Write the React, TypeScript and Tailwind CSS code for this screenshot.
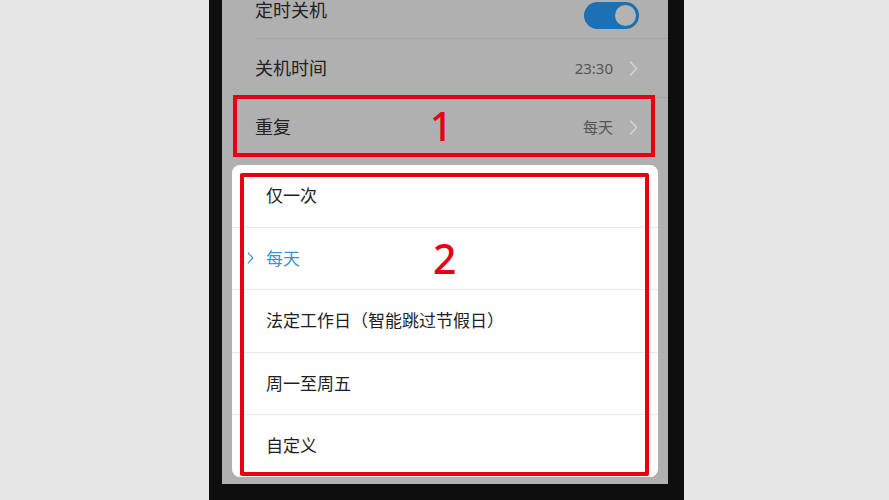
import React from 'react';

const Chevron: React.FC<{ className?: string }> = ({ className }) => (
  <svg width="9" height="15" viewBox="0 0 9 15" className={className} fill="none">
    <polyline points="1.5,1 7.5,7.5 1.5,14" stroke="currentColor" strokeWidth="1.5" strokeLinecap="round" strokeLinejoin="round" />
  </svg>
);

const options = ['仅一次', '每天', '法定工作日（智能跳过节假日）', '周一至周五', '自定义'];

const App: React.FC = () => {
  const selected = '每天';

  return (
    <div
      className="w-full h-[500px] bg-[#e6e6e6] flex pl-[209px] overflow-hidden"
      style={{ fontFamily: '"Noto Sans", "Noto Sans CJK SC", sans-serif' }}
    >
      {/* Phone body */}
      <div className="w-[475px] h-[500px] bg-[#0e0e0e] pl-[13px] pr-[16px] pb-[16px] flex">
        {/* Screen, dimmed behind the sheet */}
        <div className="relative w-[446px] h-[484px] bg-[#b0b0b0] overflow-hidden flex flex-col">
          <div className="-mt-[19px] pl-[33px]">
            <div className="h-[58px] flex items-center justify-between pr-[29px] border-b border-[#a6a6a6]">
              <span className="text-[18px] leading-[18px] text-[#222222]">定时关机</span>
              <div className="w-[55px] h-[27px] rounded-full bg-[#1c70b4] flex items-center justify-end pr-[1px] mt-[12px]">
                <div className="w-[25px] h-[25px] rounded-full bg-[#b3b3b3] border-2 border-[#1c70b4]" />
              </div>
            </div>
            <div className="h-[59px] flex items-center justify-between pr-[30px] border-b border-[#a6a6a6]">
              <span className="text-[18px] text-[#222222]">关机时间</span>
              <div className="flex items-center gap-[16px] text-[#555555]">
                <span className="text-[15px]">23:30</span>
                <Chevron className="text-[#d4d4d4]" />
              </div>
            </div>
            <div className="h-[59px] flex items-center justify-between pr-[30px]">
              <span className="text-[18px] text-[#222222]">重复</span>
              <div className="flex items-center gap-[16px] text-[#555555]">
                <span className="text-[15px]">每天</span>
                <Chevron className="text-[#d4d4d4]" />
              </div>
            </div>
          </div>

          {/* Repeat picker sheet */}
          <div className="relative mt-[8px] mx-[10px] h-[312px] bg-white rounded-[8px] flex flex-col">
            {options.map((opt, i) => {
              const active = opt === selected;
              return (
                <div
                  key={opt}
                  className={`relative flex-1 flex items-center pl-[34px] ${i < options.length - 1 ? 'border-b border-[#e8e8e8]' : ''}`}
                >
                  {active && <Chevron className="absolute left-[15px] text-[#3b92cf] w-[7px] h-[12px]" />}
                  <span className={`text-[17px] ${active ? 'text-[#3b92cf]' : 'text-[#1e1e1e]'}`}>{opt}</span>
                </div>
              );
            })}

            <div className="absolute left-[8px] top-[8px] w-[409px] h-[303px] border-4 border-[#e60012] rounded-[2px] pointer-events-none" />
            <span className="absolute left-[201px] top-[73px] text-[41px] leading-none text-[#e60012] font-medium">2</span>
          </div>

          {/* Highlight around the repeat row */}
          <div className="absolute left-[11px] top-[95px] w-[422px] h-[62px] border-4 border-[#e60012] pointer-events-none" />
          <span className="absolute left-[208px] top-[106px] text-[39px] leading-none text-[#e60012] font-medium">1</span>
        </div>
      </div>
    </div>
  );
};

export default App;
